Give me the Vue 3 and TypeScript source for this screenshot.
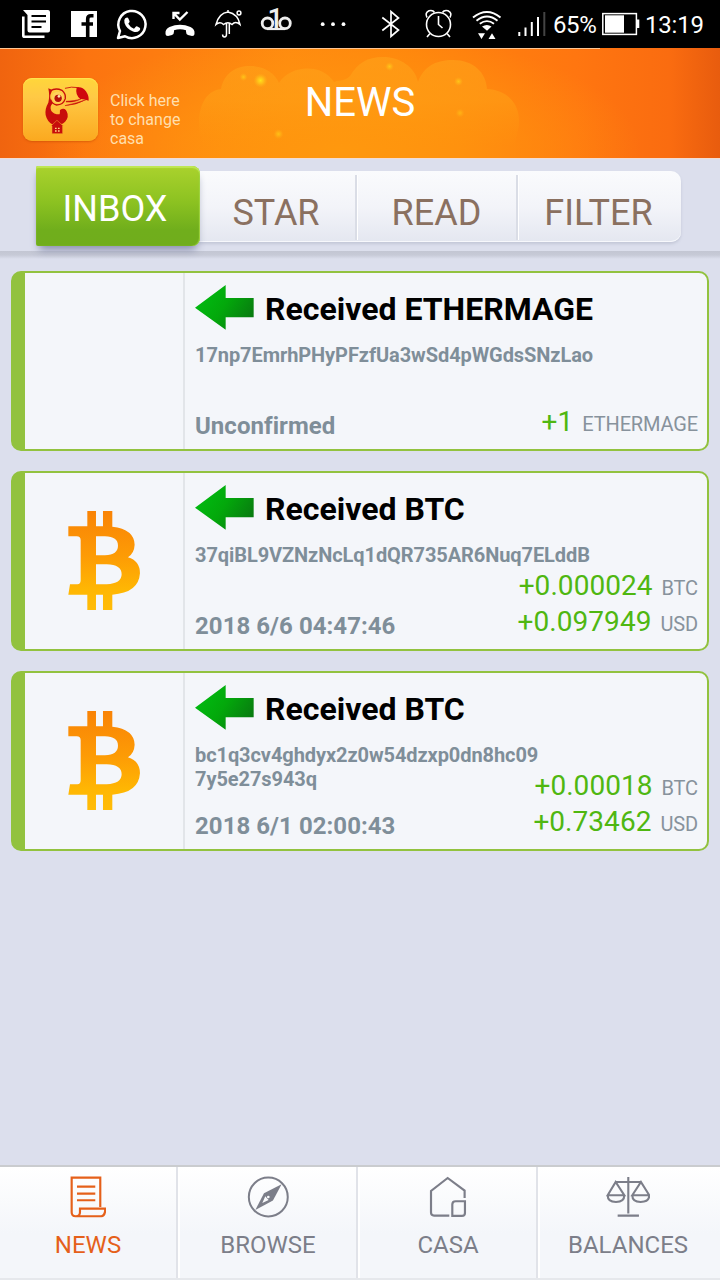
<script setup lang="ts">
interface Amount {
  value: string
  unit: string
}

interface Message {
  id: number
  title: string
  address: string[]
  status: string
  bitcoin: boolean
  amounts: Amount[]
}

const tabs: string[] = ['INBOX', 'STAR', 'READ', 'FILTER']

const messages: Message[] = [
  {
    id: 1,
    title: 'Received ETHERMAGE',
    address: ['17np7EmrhPHyPFzfUa3wSd4pWGdsSNzLao'],
    status: 'Unconfirmed',
    bitcoin: false,
    amounts: [{ value: '+1', unit: 'ETHERMAGE' }],
  },
  {
    id: 2,
    title: 'Received BTC',
    address: ['37qiBL9VZNzNcLq1dQR735AR6Nuq7ELddB'],
    status: '2018 6/6 04:47:46',
    bitcoin: true,
    amounts: [
      { value: '+0.000024', unit: 'BTC' },
      { value: '+0.097949', unit: 'USD' },
    ],
  },
  {
    id: 3,
    title: 'Received BTC',
    address: ['bc1q3cv4ghdyx2z0w54dzxp0dn8hc09', '7y5e27s943q'],
    status: '2018 6/1 02:00:43',
    bitcoin: true,
    amounts: [
      { value: '+0.00018', unit: 'BTC' },
      { value: '+0.73462', unit: 'USD' },
    ],
  },
]
</script>

<template>
  <div class="screen">
    <div class="status">
      <svg class="status-left" viewBox="0 0 360 48" width="360" height="48" fill="none" stroke="#fff">
        <!-- news -->
        <path d="M23.3 16.5V35.5Q23.3 36.8 24.6 36.8H44.5" stroke-width="2.6" />
        <path d="M23 10H48Q50 10 50 12V30.500Q50 32.500 48 32.500H29.500Q27.500 32.500 27.500 30.500V15Z" fill="#fff" stroke="none" />
        <path d="M31.500 16H46M31.500 21.500H46M31.500 27H41.500" stroke="#000" stroke-width="2" />
        <!-- facebook -->
        <rect x="71" y="11" width="26" height="26" fill="#fff" stroke="none" />
        <path d="M93.500 15.800H91Q87.700 15.800 87.700 19V37M81.500 24H93" stroke="#000" stroke-width="3.600" />
        <!-- whatsapp -->
        <path d="M118 38L120 31A13.600 13.600 0 1 1 125 36.200Z" stroke-width="2.500" stroke-linejoin="round" />
        <path d="M124.300 20Q124.800 17.500 127 17.500Q128 17.500 128.500 18.800L129.600 21.200Q129.900 22 128.300 23.700Q130 27 134 28.700L136 26.500Q136.600 26 137.400 26.500L140 28Q140.600 29 139.500 30.500Q137 33 133 31.500Q126.500 29 124.500 23Z" fill="#fff" stroke="none" />
        <!-- missed call -->
        <path d="M173.500 19V13H179.500M173.500 13L179.800 19.500L187.500 12" stroke-width="2.400" />
        <path d="M165.500 33.500Q165 29 169.500 27Q180 22.500 190.500 27Q195 29 194.500 33.500Q194.500 36 192 36L188 35Q186 34.500 186 31.500V30.200Q180 28.500 174 30.200V31.500Q174 34.500 172 35L168 36Q165.500 36 165.500 33.500Z" fill="#fff" stroke="none" />
        <!-- umbrella -->
        <g stroke-width="1.500">
          <path d="M216 24.500Q219 13 228 12Q238 14 240 24.500Q235.500 20.500 232 24.500Q228 21 223.500 24.500Q220 21 216 24.500ZM226.500 23V34Q226.500 37 224.500 37Q222.600 37 222.600 34.500M229.300 23V34M228 10V12" />
          <circle cx="239" cy="13" r="1.900" />
        </g>
        <!-- ring pair -->
        <g stroke-width="2.800" stroke="#ededed">
          <circle cx="267.500" cy="23.300" r="5.300" />
          <circle cx="285" cy="23.300" r="5.300" />
          <path d="M267 29H285" stroke-width="2.200" />
        </g>
        <text class="one" x="267.500" y="28">1</text>
        <g fill="#fff" stroke="none">
          <circle cx="322.700" cy="24.200" r="1.900" />
          <circle cx="333" cy="24.200" r="1.900" />
          <circle cx="343.500" cy="24.200" r="1.900" />
        </g>
      </svg>
      <svg class="status-right" viewBox="360 0 190 48" width="190" height="48" fill="none" stroke="#fff">
        <path d="M382.300 17.500L398.500 30L391 36.500V11.500L398.500 18L382.300 30.500" stroke-width="1.700" />
        <g stroke-width="1.600">
          <circle cx="438.500" cy="24.500" r="12" />
          <path d="M438.500 16V24.500L442.500 28M430 33.500L427 37M447 33.500L450 37" />
          <path d="M427 17.500Q424.500 13 429 10.700Q433 9.700 434.500 12.500M450 17.500Q452.500 13 448 10.700Q444 9.700 442.500 12.500" />
        </g>
        <g stroke-width="1.900">
          <path d="M473 17.500Q487 6.500 500.500 17.500M476.500 20.700Q487 12.500 497.500 20.700M479.800 23.800Q487 18.500 494 23.800" />
          <path d="M482 26.500Q487 23.500 491.500 26.500L487 30.800Z" fill="#fff" stroke="none" />
          <path d="M478 33.200H485L481.500 39ZM488.500 39L492 33.200L495.500 39Z" fill="#fff" stroke="none" />
        </g>
        <path d="M519.300 32V36M525.500 27.500V36M531.800 22V36M538 17V36" stroke-width="2" />
        <path d="M544.300 12V36" stroke="#444" stroke-width="2" />
      </svg>
      <span class="percent">65%</span>
      <svg class="battery" viewBox="602 12 38 24" width="38" height="24">
        <rect x="602.800" y="13.600" width="33.600" height="20.800" fill="none" stroke="#fff" stroke-width="1.500" />
        <rect x="605" y="15.300" width="19" height="17.400" fill="#fff" />
        <rect x="637" y="19.500" width="2.300" height="8.500" fill="#fff" />
      </svg>
      <span class="clock">13:19</span>
    </div>

    <header class="header">
      <svg class="sky" viewBox="0 48 720 110" width="720" height="110">
        <defs>
          <linearGradient id="sky" x1="0" x2="1" y1="0" y2="0">
            <stop offset="0" stop-color="#f0640f" />
            <stop offset=".12" stop-color="#fc7410" />
            <stop offset=".4" stop-color="#ff8a10" />
            <stop offset=".55" stop-color="#ff860d" />
            <stop offset=".8" stop-color="#ff7610" />
            <stop offset=".93" stop-color="#fa6c10" />
            <stop offset="1" stop-color="#e85c0e" />
          </linearGradient>
          <radialGradient id="glow" gradientUnits="userSpaceOnUse" cx="0" cy="0" r="1" gradientTransform="translate(340 150) scale(300 120)">
            <stop offset="0" stop-color="#ff980e" />
            <stop offset=".4" stop-color="#ff960e" stop-opacity=".8" />
            <stop offset="1" stop-color="#ff960e" stop-opacity="0" />
          </radialGradient>
          <linearGradient id="cloud" gradientUnits="userSpaceOnUse" x1="0" x2="0" y1="56" y2="146">
            <stop offset="0" stop-color="#ffa31a" />
            <stop offset=".5" stop-color="#ffa016" stop-opacity=".9" />
            <stop offset="1" stop-color="#ff990d" stop-opacity="0" />
          </linearGradient>
          <radialGradient id="spark">
            <stop offset="0" stop-color="#ffe21a" />
            <stop offset=".4" stop-color="#ffd21a" stop-opacity=".7" />
            <stop offset="1" stop-color="#ffb81a" stop-opacity="0" />
          </radialGradient>
        </defs>
        <rect x="0" y="48" width="720" height="110" fill="url(#sky)" />
        <rect x="0" y="48" width="720" height="110" fill="url(#glow)" />
        <path d="M205 150C195 130 196 92 221 89C224 73 236 66 250 66C264 66 275 73 279 83C290 65 322 63 334 82C337 80 344 82 350 76C358 63 367 57 383 57C400 57 415 67 418 82C424 66 436 60 453 60C473 60 486 72 487 89C510 90 523 108 518 130Q516 142 510 150Z" fill="url(#cloud)" opacity=".6" />
        <circle cx="260.500" cy="80.500" r="7" fill="url(#spark)" />
        <circle cx="243.500" cy="77" r="4" fill="url(#spark)" opacity=".6" />
        <circle cx="278.500" cy="134" r="5" fill="url(#spark)" opacity=".55" />
        <circle cx="389.500" cy="66.500" r="4.500" fill="url(#spark)" opacity=".6" />
        <circle cx="458.500" cy="81.500" r="4.500" fill="url(#spark)" opacity=".6" />
        <circle cx="460" cy="113" r="4.500" fill="url(#spark)" opacity=".4" />
        <rect x="0" y="48" width="600" height="1" fill="#ffc592" />
      </svg>
      <div class="logo">
        <svg viewBox="69 96 224 190" width="74.600" height="63.300" fill="none" stroke="#c80d0b">
          <path d="M145 127L157 132L151 147Q149 160 158 172Q148 182 154 195Q162 207 169 224Q181 212 180 192Q197 181 203 204Q206 221 188 233L160 237Q142 229 137 207Q134 189 145 170Q150 150 145 127Z" fill="#c80d0b" stroke="none" />
          <path d="M154 194Q160 206 182 205L196 192Q206 210 196 226L160 236Z" fill="#c80d0b" stroke="none" />
          <path d="M151 135Q166 124 186 133Q198 143 196 158Q190 177 170 177Q156 174 152 161" stroke-width="4" />
          <circle cx="173" cy="154" r="17" fill="#ffd25b" stroke="none" />
          <circle cx="174.500" cy="157" r="11" fill="#b4100b" stroke="none" />
          <circle cx="177" cy="151" r="4" fill="#ffe6b0" stroke="none" />
          <path d="M195 127Q213 121 237 125" stroke-width="2.600" />
          <path d="M230 125Q246 120 258 136Q268 151 266 164Q255 160 241 159Q225 145 230 125Z" fill="#cf080d" stroke="none" />
          <path d="M198 168Q224 170 243 159Q225 165 198 166M195 179Q229 177 258 161Q234 170 195 179" fill="#c80d0b" stroke-width="1.500" />
          <path d="M153 240L171 223L190 240H188V263H156V240Z" fill="#c80d0b" stroke="#f7b32e" stroke-width="1.500" />
          <path d="M165 245H170V249H165ZM174 245H179V249H174ZM165 253H170V257H165ZM174 253H179V257H174Z" fill="#ffd783" stroke="none" />
        </svg>
      </div>
      <div class="hint">Click here<br />to change<br />casa</div>
      <h1 class="title">NEWS</h1>
    </header>

    <div class="tabbar">
      <div class="tabs">
        <div v-for="(tab, i) in tabs" :key="tab" class="tab" :class="{ active: i === 0 }">{{ tab }}</div>
      </div>
    </div>
    <div class="edge"></div>

    <main class="list">
      <article v-for="m in messages" :key="m.id" class="card">
        <div class="thumb">
          <svg v-if="m.bitcoin" viewBox="204 137 217 298" width="72.300" height="99.300">
            <defs>
              <linearGradient :id="'coin' + m.id" gradientUnits="userSpaceOnUse" x1="0" x2="0" y1="137" y2="434">
                <stop offset="0" stop-color="#f98306" />
                <stop offset=".45" stop-color="#fd9b05" />
                <stop offset=".8" stop-color="#ffb703" />
                <stop offset="1" stop-color="#ffbc08" />
              </linearGradient>
            </defs>
            <path
              fill-rule="evenodd"
              :fill="`url(#coin${m.id})`"
              d="M262 137H288V183H309V137H337V184Q403 192 404 238Q403 263 384 276Q420 287 420 324Q416 383 337 388V434H309V388H288V434H262V388H205L210 357H232Q242 357 242 345V225Q242 213 230 213H205V183H262ZM288 213V270H315Q354 268 354 241Q354 214 315 213ZM288 297V357H320Q365 355 365 327Q365 298 320 297Z"
            />
          </svg>
        </div>
        <div class="body">
          <div class="heading">
            <svg viewBox="585 59 177 135" width="59" height="45">
              <defs>
                <linearGradient :id="'arrow' + m.id" x1="0" x2="1" y1=".2" y2=".7">
                  <stop offset="0" stop-color="#00bd12" />
                  <stop offset=".5" stop-color="#03a80b" />
                  <stop offset="1" stop-color="#087a10" />
                </linearGradient>
              </defs>
              <path d="M585 127L677 59V98H761V156H677V193Z" :fill="`url(#arrow${m.id})`" />
            </svg>
            <h2>{{ m.title }}</h2>
          </div>
          <div class="address">
            <div v-for="line in m.address" :key="line">{{ line }}</div>
          </div>
          <div class="foot">
            <div class="when">{{ m.status }}</div>
            <div class="amounts">
              <div v-for="a in m.amounts" :key="a.unit" class="amount">
                <span class="value">{{ a.value }}</span><span class="unit">{{ a.unit }}</span>
              </div>
            </div>
          </div>
        </div>
      </article>
    </main>

    <nav class="nav">
      <div class="item current">
        <svg viewBox="208 60 110 128" width="36.600" height="42.600" fill="none" stroke="currentColor" stroke-width="6.500">
          <path d="M299 156V68H213V172Q213 184 225 184H302Q314 183 314 161H238V172Q238 184 226 184" />
          <path d="M229 95H284M229 116H284M229 136H284" />
        </svg>
        <span>NEWS</span>
      </div>
      <div class="item">
        <svg viewBox="738 60 128 128" width="42.600" height="42.600" fill="none" stroke="currentColor" stroke-width="6">
          <circle cx="802" cy="126" r="58.500" />
          <path d="M842 88L789 115L763 165L816 137Z" fill="currentColor" stroke="none" />
          <path d="M793 124L798 130L803 135L784 144Z" fill="#fafbfd" stroke="none" />
          <circle cx="802" cy="126" r="4" fill="#fafbfd" stroke="none" />
        </svg>
        <span>BROWSE</span>
      </div>
      <div class="item">
        <svg viewBox="207 60 112 128" width="37.300" height="42.600" fill="none" stroke="currentColor" stroke-width="6.500">
          <path d="M268 182H222Q213 182 213 173V108L263 69L314 107V129" />
          <path d="M287 139H315V174Q315 183 306 183H277V149Q277 139 287 139Z" />
        </svg>
        <span>CASA</span>
      </div>
      <div class="item">
        <svg viewBox="736 60 134 128" width="44.600" height="42.600" fill="none" stroke="currentColor" stroke-width="6.300">
          <path d="M803 66V176M771 182H835M765 81H841" />
          <path d="M741 121L765 81L791 121ZM741 121Q741 141 766 141Q791 141 791 121M815 121L841 81L866 121ZM815 121Q815 141 840 141Q866 141 866 121" />
        </svg>
        <span>BALANCES</span>
      </div>
    </nav>
  </div>
</template>

<style>
body {
  margin: 0;
}
</style>

<style scoped>
.screen {
  width: 720px;
  height: 1280px;
  display: flex;
  flex-direction: column;
  overflow: hidden;
  background: #dcdfed;
  font-family: Roboto, "Liberation Sans", sans-serif;
}
.screen svg {
  display: block;
  flex: none;
}

/* status bar */
.status {
  height: 48px;
  flex: none;
  display: flex;
  align-items: center;
  background: #000;
  color: #fff;
  font-size: 24px;
  line-height: 48px;
}
.one {
  font: 500 28px Roboto, sans-serif;
  fill: #ededed;
  stroke: none;
}
.percent {
  width: 52px;
  padding-top: 2px;
  box-sizing: border-box;
  text-indent: 3px;
  letter-spacing: -0.4px;
}
.clock {
  margin-left: 5px;
  padding-top: 2px;
  letter-spacing: -0.2px;
}

/* header */
.header {
  height: 110px;
  flex: none;
  position: relative;
  display: flex;
}
.sky {
  position: absolute;
  inset: 0;
}
.logo {
  position: relative;
  width: 74.5px;
  height: 63px;
  margin: 30px 0 0 23px;
  border-radius: 9px;
  background: linear-gradient(#ffd63a, #ffc945 30%, #fba91f);
  box-shadow: 0 1px 2px rgba(190, 70, 0, 0.5), inset 0 1px 1px #ffe650;
}
.hint {
  position: relative;
  margin: 43px 0 0 12.5px;
  width: 80px;
  font-size: 16px;
  line-height: 19px;
  color: #ffdfad;
  white-space: nowrap;
}
.title {
  position: absolute;
  left: 0;
  right: 0;
  top: 31px;
  margin: 0;
  text-align: center;
  font-size: 40px;
  line-height: 47px;
  font-weight: 400;
  color: #fff;
}

/* tabs */
.tabbar {
  height: 93px;
  flex: none;
  box-sizing: border-box;
  padding: 13px 39px 0 36px;
  border-top: 1px solid #f3dcd3;
  position: relative;
  z-index: 1;
}
.edge {
  height: 8px;
  flex: none;
  background: linear-gradient(#c3c6d3, #c7cad7 50%, #dcdfed);
}
.tabs {
  display: grid;
  grid-template-columns: 160px 160px 161px 163px;
  height: 71px;
  margin-top: -1px;
  border-radius: 0 10px 10px 0;
  background: linear-gradient(#fafbfd, #f3f4f9 50%, #e4e7f0);
  box-shadow: 0 2px 3px #c3c7d7, inset 0 -1px 0 #f7f8fc;
}
.tab {
  position: relative;
  text-align: center;
  font-size: 36px;
  line-height: 84px;
  color: #8a7060;
}
.tab:nth-child(n + 3)::before {
  content: "";
  position: absolute;
  left: -1px;
  top: 4px;
  width: 2px;
  height: 65px;
  background: #dadde6;
  border-right: 1px solid #fff;
}
.tab.active {
  width: 164px;
  height: 80px;
  margin-top: -5px;
  box-sizing: border-box;
  padding-right: 6px;
  line-height: 86px;
  z-index: 1;
  color: #fff;
  border-radius: 2px 8px 8px 2px;
  background: linear-gradient(#aad22d, #8cc221 45%, #70ae1c 80%, #70ad1c);
  box-shadow: inset 0 2px 1px #bfe756, inset -1px 0 1px #9bd13f, 0 7px 8px -3px #8a90ae;
}

/* messages */
.list {
  flex: 1;
  display: flex;
  flex-direction: column;
  gap: 20px;
  padding: 12px 11px 0;
}
.card {
  width: 698px;
  height: 180px;
  box-sizing: border-box;
  flex: none;
  display: flex;
  border: 2px solid #92c23f;
  border-left-width: 14px;
  border-radius: 10px;
  background: #f4f6fa;
}
.thumb {
  width: 160px;
  box-sizing: border-box;
  padding: 38px 0 0 43px;
  border-right: 2px solid #e2e5e9;
}
.body {
  flex: 1;
  display: flex;
  flex-direction: column;
  padding: 12px 9px 9px 10px;
}
.heading {
  display: flex;
  align-items: center;
  height: 45px;
}
h2 {
  margin: 2px 0 0 11px;
  font-size: 32px;
  line-height: 40px;
  font-weight: 700;
  color: #000;
  white-space: nowrap;
}
.address {
  height: 24px;
  flex: none;
  margin-top: 13px;
  font-size: 20px;
  line-height: 24px;
  font-weight: 700;
  letter-spacing: -0.08px;
  color: #7f8e99;
}
.foot {
  flex: 1;
  display: flex;
  justify-content: space-between;
  align-items: flex-end;
}
.when {
  margin-bottom: -1px;
  font-size: 24px;
  line-height: 30px;
  font-weight: 700;
  letter-spacing: 0.05px;
  color: #7f8e99;
}
.amount {
  height: 36px;
  line-height: 36px;
  text-align: right;
  white-space: nowrap;
}
.value {
  font-size: 28px;
  letter-spacing: 0.05px;
  color: #4fb711;
}
.unit {
  margin-left: 9px;
  font-size: 20px;
  letter-spacing: -0.15px;
  color: #87929c;
}

/* bottom navigation */
.nav {
  height: 115px;
  flex: none;
  box-sizing: border-box;
  display: grid;
  grid-template-columns: repeat(4, 180px);
  border-top: 2px solid #cacccf;
  border-bottom: 2px solid #e6e8ec;
  background: linear-gradient(#fff, #f4f6fa 60%);
}
.item {
  position: relative;
  display: flex;
  flex-direction: column;
  align-items: center;
  padding: 8px 4px 0 0;
  color: #7c7e89;
  font-size: 24px;
  line-height: 28px;
}
.item span {
  margin-top: 13px;
}
.item:not(:last-child)::after {
  content: "";
  position: absolute;
  right: 0;
  top: 0;
  bottom: 0;
  width: 2px;
  background: #e1e3e9;
  border-right: 2px solid #fff;
}
.current {
  color: #e5601a;
}
</style>
